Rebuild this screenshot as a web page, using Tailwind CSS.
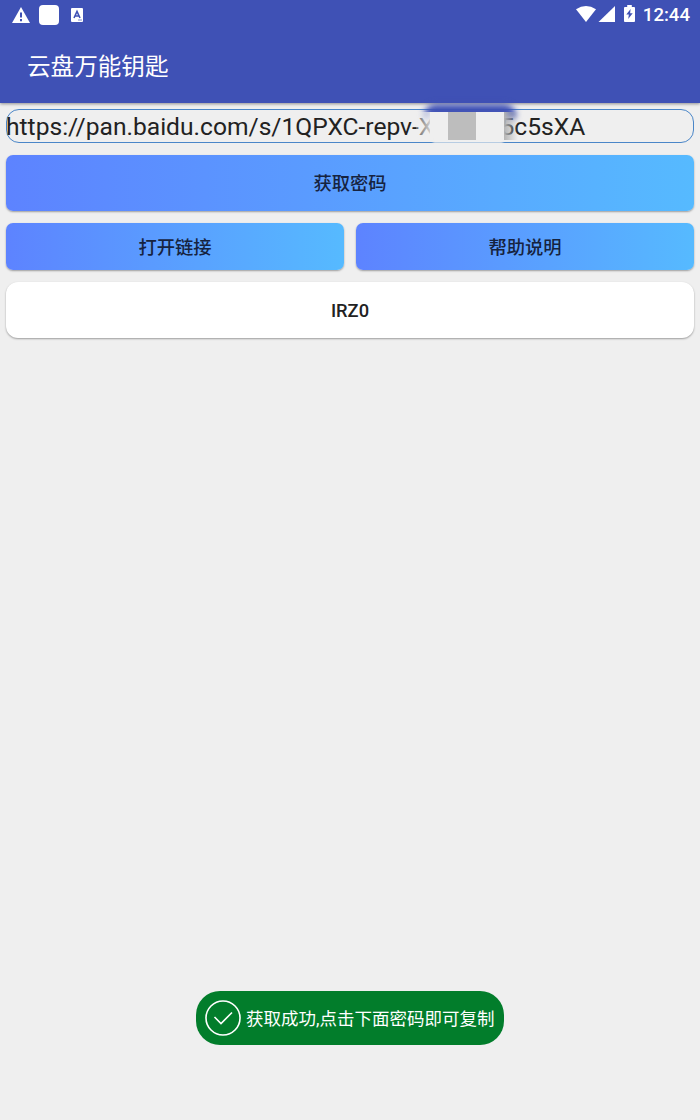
<!DOCTYPE html>
<html lang="zh-CN">
<head>
  <meta charset="UTF-8">
  <meta name="viewport" content="width=device-width, initial-scale=1.0">
  <title>云盘万能钥匙</title>
  <script src="https://cdn.jsdelivr.net/npm/@tailwindcss/browser@4"></script>
</head>
<body class="bg-[#efefef] font-[Roboto,'Noto_Sans_CJK_SC',sans-serif]">
<div class="relative flex h-[1120px] w-[700px] flex-col overflow-hidden">

  <!-- Status bar and title -->
  <header class="h-[103px] shrink-0 bg-[#3f51b5] text-white shadow-[0_1px_3px_rgba(0,0,0,0.4)]">
    <div class="flex h-[30px] items-center justify-between pr-[10px] pl-3">
      <div class="flex items-center">
        <svg class="h-[17px] w-[18px]" viewBox="0 0 18 17">
          <path d="M9 0 L18 16 H0 Z" fill="#fff"/>
          <path d="M9 5.500v5M9 12v2.200" stroke="#3f51b5" stroke-width="2"/>
        </svg>
        <div class="ml-[9px] h-5 w-5 rounded bg-white"></div>
        <svg class="ml-3 h-[14px] w-3" viewBox="0 0 12 14">
          <rect width="12" height="14" rx="1" fill="#fff"/>
          <path d="M3 10 L6 3.500 L9 10 M4.200 8h3.600" stroke="#3f51b5" stroke-width="1.600" fill="none"/>
          <path d="M7 12h4" stroke="#a9b1dc" stroke-width="1.500"/>
        </svg>
      </div>
      <div class="flex items-center">
        <svg class="-mt-[2px] h-4 w-5" viewBox="0 0 20 16">
          <path d="M0 3.300 Q10 -3.300 20 3.300 L10 16 Z" fill="#fff"/>
        </svg>
        <svg class="-mt-[2px] ml-[2px] h-4 w-[17px]" viewBox="0 0 17 16">
          <path d="M17 0 V16 H0.500 Z" fill="#fff"/>
        </svg>
        <svg class="-mt-[3px] ml-[9px] h-[17px] w-[11px]" viewBox="0 0 12 17" preserveAspectRatio="none">
          <path d="M3.500 0h5v2H11q1 0 1 1v13q0 1-1 1H1q-1 0-1-1V3q0-1 1-1h2.500z" fill="#fff"/>
          <path d="M7.200 4 L2.500 9.500 H5.300 L4.600 14 L9.500 8.300 H6.700 Z" fill="#3f51b5"/>
        </svg>
        <span class="ml-[8px] pt-px text-[18.600px] leading-none font-medium">12:44</span>
      </div>
    </div>
    <h1 class="mt-[19px] pl-[27px] text-[23.600px] leading-9">云盘万能钥匙</h1>
  </header>

  <main class="flex flex-col px-[6px] pt-[6px]">
    <!-- Share link -->
    <div class="relative flex h-[34px] items-center rounded-[13px] border border-[#4a86c8] text-[24.600px] leading-none text-[#222]">
      <span class="-ml-px pt-[2px]">https://pan.baidu.com/s/1QPXC-repv-X</span>
      <span class="absolute left-[493.500px] pt-[2px]">5c5sXA</span>
      <!-- Hidden part of the link -->
      <div class="absolute -top-[6px] left-[417px] h-[14px] w-[92px] rounded-t-[12px] bg-[#3f51b5] blur-[3px]"></div>
      <div class="absolute top-[2px] left-[409px] h-[29px] w-[18px] bg-linear-to-r from-[#efefef]/30 to-[#efefef]"></div>
      <div class="absolute top-[2px] left-[423px] h-[29px] w-[74px] bg-[#efefef]"></div>
      <div class="absolute top-[30px] left-[426px] h-[3px] w-[70px] bg-[#efefef] blur-[1px]"></div>
      <div class="absolute top-[2px] left-[441px] h-7 w-7 bg-[#bdbdbd]"></div>
      <div class="absolute top-[2px] left-[497px] h-7 w-[14px] bg-linear-to-r from-[#b4b4b4] to-[#efefef]/0"></div>
    </div>

    <button class="mt-3 h-14 rounded-[7px] bg-linear-to-r/srgb from-[#5d83ff] to-[#56baff] pt-px text-[18.300px] font-medium text-[#16233f] shadow-[0_1px_2px_rgba(0,0,0,0.35)]">获取密码</button>

    <div class="mt-3 grid grid-cols-2 gap-3">
      <button class="h-[47px] rounded-[7px] bg-linear-to-r/srgb from-[#5d83ff] to-[#56baff] pt-[2px] text-[18.300px] font-medium text-[#16233f] shadow-[0_1px_2px_rgba(0,0,0,0.35)]">打开链接</button>
      <button class="h-[47px] rounded-[7px] bg-linear-to-r/srgb from-[#5d83ff] to-[#56baff] pt-[2px] text-[18.300px] font-medium text-[#16233f] shadow-[0_1px_2px_rgba(0,0,0,0.35)]">帮助说明</button>
    </div>

    <button class="mt-3 h-14 rounded-xl bg-white pt-px text-[18.300px] font-medium text-[#222] shadow-[0_1px_2px_rgba(0,0,0,0.35)]">IRZ0</button>
  </main>

  <!-- Toast -->
  <div class="absolute top-[991px] left-[196px] flex h-[54px] w-[308px] items-center rounded-[24px] bg-[#027d2b] pl-[9px] text-white">
    <svg class="h-9 w-9 shrink-0" viewBox="0 0 36 36" fill="none" stroke="#fff">
      <circle cx="18" cy="18" r="17" stroke-width="1.600"/>
      <path d="M9.500 17 L16 23.500 L27 12.500" stroke-width="1.600"/>
    </svg>
    <span class="ml-[5px] pt-[2px] text-[17.500px] whitespace-nowrap">获取成功,点击下面密码即可复制</span>
  </div>
</div>
</body>
</html>
